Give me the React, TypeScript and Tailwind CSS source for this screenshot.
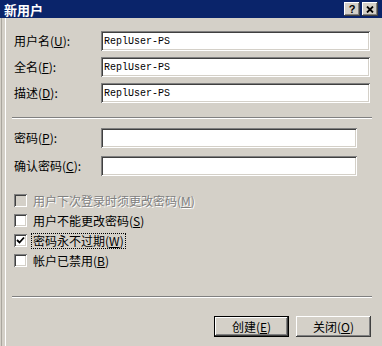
import React from 'react'

const sunken =
  'shadow-[inset_1px_1px_0_#808080,inset_-1px_-1px_0_#ffffff,inset_2px_2px_0_#404040,inset_-2px_-2px_0_#d4d0c8]'
const raised =
  'shadow-[inset_-1px_-1px_0_#404040,inset_1px_1px_0_#ffffff,inset_-2px_-2px_0_#808080,inset_2px_2px_0_#d4d0c8]'

const Field = ({ label, hot, value, wide }: { label: string; hot: string; value?: string; wide?: boolean }) => (
  <div className="flex items-center h-[20px]">
    <div className="w-[87px] text-[12px] leading-none text-black">
      {label}(<u>{hot}</u>):
    </div>
    <div
      className={`h-[20px] bg-white ${sunken} ${wide ? 'w-[269px]' : 'w-[256px]'} flex items-center pl-[3px] font-['Liberation_Mono',monospace] text-[10px] text-black`}
    >
      {value}
    </div>
  </div>
)

const Check = ({
  label,
  hot,
  checked,
  disabled,
  focused,
}: {
  label: string
  hot: string
  checked?: boolean
  disabled?: boolean
  focused?: boolean
}) => (
  <div className="flex items-start h-[20px]">
    <div
      className={`mt-[3px] w-[13px] h-[13px] ${sunken} ${disabled ? 'bg-[#d4d0c8]' : 'bg-white'} flex items-center justify-center`}
    >
      {checked && (
        <svg width="9" height="9" viewBox="0 0 9 9">
          <path d="M1 4 L3.5 6.5 L8 1.5" stroke="#000" strokeWidth="1.8" fill="none" />
        </svg>
      )}
    </div>
    <div
      className={`ml-[4px] mt-[2px] px-[1px] h-[16px] flex items-center text-[12px] leading-none ${
        disabled ? 'text-[#808080] [text-shadow:1px_1px_0_#ffffff]' : 'text-black'
      } ${focused ? 'border border-dotted border-black' : 'border border-transparent'}`}
    >
      {label}(<u>{hot}</u>)
    </div>
  </div>
)

const Separator = () => <div className="ml-[6px] w-[360px] border-t border-[#808080] border-b border-b-white" />

const Btn = ({ label, hot, isDefault }: { label: string; hot: string; isDefault?: boolean }) => (
  <div className={`w-[75px] h-[21px] ${isDefault ? 'border border-black' : ''} bg-[#d4d0c8]`}>
    <div className={`w-full h-full ${raised} flex items-center justify-center text-[12px] leading-none text-black`}>
      {label}(<u>{hot}</u>)
    </div>
  </div>
)

export default function App() {
  return (
    <div className="w-[382px] h-[346px] bg-[#d4d0c8] flex flex-col overflow-hidden font-['Noto_Sans_CJK_SC',sans-serif]">
      <div className="h-[18px] bg-[#0a246a] flex items-center pl-[4px] pr-[4px]">
        <div className="text-[13px] font-bold text-white leading-none flex-1">新用户</div>
        <div className={`w-[16px] h-[14px] bg-[#d4d0c8] ${raised} flex items-center justify-center text-[11px] font-bold text-black leading-none font-['Liberation_Sans',sans-serif]`}>
          ?
        </div>
        <div className={`ml-[2px] w-[16px] h-[14px] bg-[#d4d0c8] ${raised} flex items-center justify-center`}>
          <svg width="8" height="7" viewBox="0 0 8 7">
            <path d="M1 0.5 L7 6.5 M7 0.5 L1 6.5" stroke="#000" strokeWidth="1.8" fill="none" />
          </svg>
        </div>
      </div>
      <div className="flex-1 pl-[1px] flex">
        <div className="flex-1 border-l border-[#aaa69e] pl-[3px] flex">
          <div className="flex-1 border-l border-white flex flex-col">
            <div className="mt-[13px] pl-[8px] flex flex-col gap-[6px]">
              <Field label="用户名" hot="U" value="ReplUser-PS" wide />
              <Field label="全名" hot="F" value="ReplUser-PS" wide />
              <Field label="描述" hot="D" value="ReplUser-PS" wide />
            </div>
            <div className="mt-[14px]">
              <Separator />
            </div>
            <div className="mt-[9px] pl-[8px] flex flex-col gap-[8px]">
              <Field label="密码" hot="P" />
              <Field label="确认密码" hot="C" />
            </div>
            <div className="mt-[15px] pl-[8px] flex flex-col">
              <Check label="用户下次登录时须更改密码" hot="M" disabled />
              <Check label="用户不能更改密码" hot="S" />
              <Check label="密码永不过期" hot="W" checked focused />
              <Check label="帐户已禁用" hot="B" />
            </div>
            <div className="mt-[25px]">
              <Separator />
            </div>
            <div className="mt-[18px] flex justify-end gap-[7px] pr-[11px]">
              <Btn label="创建" hot="E" isDefault />
              <Btn label="关闭" hot="O" />
            </div>
          </div>
        </div>
      </div>
    </div>
  )
}
